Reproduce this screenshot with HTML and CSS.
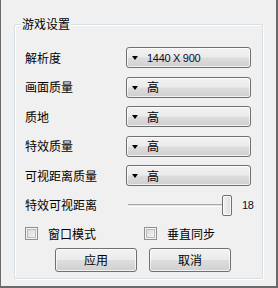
FILE: index.html
```html
<!DOCTYPE html>
<html lang="zh">
<head>
<meta charset="utf-8">
<title>游戏设置</title>
<link rel="stylesheet" href="styles.css">
</head>
<body>
<div class="window">
  <div class="group">
    <span class="group-title">游戏设置</span>
    <div class="rows">
      <div class="row">
        <span class="label">解析度</span>
        <div class="combo"><span class="arrow"></span><span class="value latin">1440 X 900</span></div>
      </div>
      <div class="row">
        <span class="label">画面质量</span>
        <div class="combo"><span class="arrow"></span><span class="value">高</span></div>
      </div>
      <div class="row">
        <span class="label">质地</span>
        <div class="combo"><span class="arrow"></span><span class="value">高</span></div>
      </div>
      <div class="row">
        <span class="label">特效质量</span>
        <div class="combo"><span class="arrow"></span><span class="value">高</span></div>
      </div>
      <div class="row">
        <span class="label">可视距离质量</span>
        <div class="combo"><span class="arrow"></span><span class="value">高</span></div>
      </div>
      <div class="row">
        <span class="label">特效可视距离</span>
        <div class="slider">
          <div class="track"></div>
          <div class="thumb"></div>
          <span class="num latin">18</span>
        </div>
      </div>
      <div class="checks">
        <label class="check"><span class="box"></span><span>窗口模式</span></label>
        <label class="check"><span class="box"></span><span>垂直同步</span></label>
      </div>
      <div class="buttons">
        <div class="btn">应用</div>
        <div class="btn">取消</div>
      </div>
    </div>
  </div>
</div>
</body>
</html>
```

FILE: styles.css
```css
* { box-sizing: border-box; }
html, body { margin: 0; padding: 0; background: #f0f0f0; }
body {
  font-family: "Noto Sans CJK SC", "Noto Sans", sans-serif;
  font-size: 12px;
  color: #000;
}
.window {
  width: 278px;
  height: 288px;
  background: #f0f0f0;
  border-left: 1px solid #6a6a6a;
  border-right: 2px solid #6a6a6a;
  border-bottom: 2px solid #6a6a6a;
  padding: 24px 13px 0 13px;
  overflow: hidden;
}
.group {
  position: relative;
  height: 255px;
  border: 1px solid #d5dfe5;
  box-shadow: inset 1px 1px 0 #fff, 1px 1px 0 #fff;
  border-radius: 2px;
  padding: 22px 11px 0 10px;
}
.group-title {
  position: absolute;
  top: -9px;
  left: 6px;
  padding: 0 1px;
  line-height: 16px;
  background: #f0f0f0;
}
.rows {
  display: flex;
  flex-direction: column;
  gap: 8.5px;
}
.row {
  display: grid;
  grid-template-columns: 101px 1fr;
  align-items: center;
  height: 21px;
}
.label { line-height: 16px; }
.combo {
  height: 21px;
  border: 1px solid #707070;
  border-radius: 3px;
  background: linear-gradient(#f2f2f2 0%, #ebebeb 48%, #dddddd 52%, #cfcfcf 100%);
  box-shadow: inset 0 0 0 1px rgba(255,255,255,0.7);
  display: flex;
  align-items: center;
  padding-left: 5px;
}
.arrow {
  width: 0;
  height: 0;
  border-left: 3.5px solid transparent;
  border-right: 3.5px solid transparent;
  border-top: 4px solid #000;
  margin-top: 1px;
}
.value {
  margin-left: 9px;
  line-height: 16px;
}
.latin {
  font-family: "Liberation Sans", Arial, sans-serif;
  font-size: 11px;
  letter-spacing: -0.3px;
  color: #0c0c30;
}
.slider {
  display: flex;
  align-items: center;
  height: 21px;
}
.track {
  width: 95px;
  height: 3px;
  margin-left: 2px;
  border-top: 1px solid #a8a8a8;
  border-bottom: 1px solid #ffffff;
  background: #e2e2e2;
}
.thumb {
  width: 10px;
  height: 21px;
  margin-left: -1px;
  border: 1px solid #707070;
  border-radius: 2px;
  background: linear-gradient(90deg, #f4f4f4, #dcdcdc);
  box-shadow: inset 0 0 0 1px rgba(255,255,255,0.8);
}
.num { margin-left: 10px; }
.checks {
  display: grid;
  grid-template-columns: 119px auto;
  margin-top: 1.5px;
  height: 13px;
  align-items: center;
}
.check {
  display: flex;
  align-items: center;
  gap: 10px;
  line-height: 16px;
}
.box {
  width: 13px;
  height: 13px;
  border: 1px solid #8e8f8f;
  background: linear-gradient(135deg, #d4d6d8, #f8f8f8);
  box-shadow: inset 0 0 0 1px #f4f4f4, inset 0 0 0 2px #b9bcc0;
}
.buttons {
  display: flex;
  gap: 12px;
  margin-left: 30px;
  margin-top: 1px;
}
.btn {
  width: 82px;
  height: 24px;
  border: 1px solid #707070;
  border-radius: 3px;
  background: linear-gradient(#f2f2f2 0%, #ebebeb 48%, #dddddd 52%, #cfcfcf 100%);
  box-shadow: inset 0 0 0 1px rgba(255,255,255,0.7);
  display: flex;
  align-items: center;
  justify-content: center;
  line-height: 16px;
}
```
